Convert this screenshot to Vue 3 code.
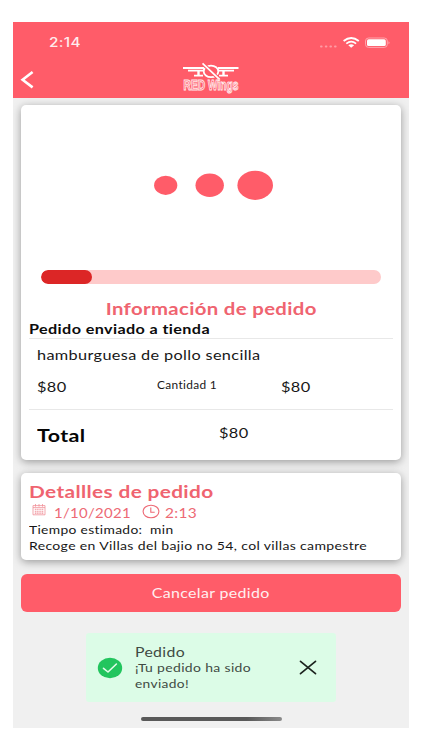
<script setup>
import { ref } from 'vue'

const order = {
  status: 'Pedido enviado a tienda',
  product: 'hamburguesa de pollo sencilla',
  price: '$80',
  quantity: 1,
  subtotal: '$80',
  total: '$80',
  date: '1/10/2021',
  time: '2:13',
  address: 'Recoge en Villas del bajio no 54, col villas campestre'
}

const progress = ref(15)
const showToast = ref(true)

// stretches a label horizontally to the given width
const vFit = {
  mounted(el, { value }) {
    el.style.transform = `scaleX(${value / el.getBoundingClientRect().width})`
  }
}
</script>

<template>
  <main class="screen">
    <header class="header">
      <div class="status-bar">
        <span v-fit="32" class="fit status-bar__time">2:14</span>
        <svg class="status-bar__icons" width="72" height="14" viewBox="0 0 72 14">
          <g fill="#ff9ba4">
            <rect x="1" y="8.4" width="2.6" height="2" rx="1" />
            <rect x="5.8" y="8.4" width="2.6" height="2" rx="1" />
            <rect x="10.4" y="8.4" width="2.6" height="2" rx="1" />
            <rect x="15" y="8.4" width="2.6" height="2" rx="1" />
          </g>
          <g fill="none" stroke="#fff" stroke-width="1.8">
            <path d="M24.6 4Q32.2-2 39.8 4" />
            <path d="M27.3 6.6Q32.2 2.7 37.1 6.6" />
          </g>
          <path d="M29.3 8.3Q32.2 6.4 35.1 8.3L32.2 10.8Z" fill="#fff" />
          <rect x="46.5" y="1" width="21.8" height="9.4" rx="3" fill="none" stroke="#ffabb3" stroke-width="0.9" />
          <rect x="48" y="2.3" width="18.8" height="6.8" rx="1.6" fill="#fff" />
          <path d="M69.5 4.2Q71.6 5.7 69.5 7.2Z" fill="#ffabb3" />
        </svg>
      </div>
      <div class="nav">
        <button type="button" class="nav__back" aria-label="Volver">
          <svg width="14" height="20" viewBox="0 0 14 20">
            <path d="M12.6 2L2.6 9.8l10 7.6" fill="none" stroke="#fff" stroke-width="2.6" />
          </svg>
        </button>
        <svg class="nav__logo" width="60" height="34" viewBox="0 0 60 34">
          <g fill="none" stroke="#fff">
            <path d="M2 6H23M37 6H57.5" stroke-width="2.2" />
            <path d="M7 8.7H22M38 8.7H53" stroke-width="1.7" />
            <path d="M17.5 9V14M42.5 9V14" stroke-width="2.4" />
            <path d="M13 13.6H22M38 13.6H47" stroke-width="1.6" />
            <ellipse cx="30" cy="9.4" rx="7.3" ry="5.8" stroke-width="1.8" />
            <path d="M21.5 1.4L38.5 17.4" stroke="#ff5c69" stroke-width="3.6" />
            <path d="M21.5 1.4L38.5 17.4" stroke-width="1.7" />
          </g>
          <text class="nav__brand" x="2.5" y="28.2" textLength="55" lengthAdjust="spacingAndGlyphs">RED Wings</text>
        </svg>
      </div>
    </header>

    <section class="card order">
      <svg class="order__dots" width="120" height="32" viewBox="0 0 120 32" fill="#ff5c69">
        <ellipse cx="12.7" cy="16.3" rx="11.6" ry="9.6" />
        <ellipse cx="56.7" cy="16.2" rx="14.2" ry="11.7" />
        <ellipse cx="102.2" cy="16.3" rx="17.8" ry="14.6" />
      </svg>
      <div class="order__progress">
        <div class="order__progress-bar" :style="{ width: progress + '%' }"></div>
      </div>
      <h1 class="order__title"><span v-fit="211" class="fit fit--center">Información de pedido</span></h1>
      <p class="order__status"><span v-fit="181" class="fit">{{ order.status }}</span></p>
      <div class="order__item">
        <p class="order__product"><span v-fit="223.5" class="fit">{{ order.product }}</span></p>
        <div class="order__row">
          <span><span v-fit="29.5" class="fit">{{ order.price }}</span></span>
          <span class="order__quantity"><span v-fit="60" class="fit">Cantidad {{ order.quantity }}</span></span>
          <span><span v-fit="29.5" class="fit">{{ order.subtotal }}</span></span>
        </div>
      </div>
      <div class="order__total">
        <strong><span v-fit="48.5" class="fit">Total</span></strong>
        <span class="order__amount"><span v-fit="29.5" class="fit">{{ order.total }}</span></span>
      </div>
    </section>

    <section class="card details">
      <h2 class="details__title"><span v-fit="184.5" class="fit">Detallles de pedido</span></h2>
      <div class="details__when">
        <svg class="details__calendar" width="14" height="12" viewBox="0 0 14 12">
          <path d="M1 1.6H13V10.8H1ZM1 3.6H13" fill="none" stroke="#f08f98" stroke-width="0.8" />
          <path d="M3.5 0V2.7M7 0V2.7M10.5 0V2.7" stroke="#f08f98" stroke-width="0.8" />
          <path d="M2.8 5.3H11.4M2.8 7.2H11.4M2.8 9.1H11.4" stroke="#f08f98" stroke-width="1.1" stroke-dasharray="1.3 0.5" />
        </svg>
        <span class="details__date"><span v-fit="77" class="fit">{{ order.date }}</span></span>
        <svg class="details__clock" width="18" height="15" viewBox="0 0 18 15">
          <ellipse cx="9" cy="7.5" rx="7.9" ry="6.3" fill="none" stroke="#ed6975" stroke-width="1.1" />
          <path d="M8.8 3.5V8.2H12.7" fill="none" stroke="#ed6975" stroke-width="1.1" />
        </svg>
        <span v-fit="32" class="fit">{{ order.time }}</span>
      </div>
      <p class="details__line"><span v-fit="144.5" class="fit">Tiempo estimado:&nbsp; min</span></p>
      <p class="details__line"><span v-fit="338" class="fit">{{ order.address }}</span></p>
    </section>

    <button type="button" class="cancel"><span v-fit="118" class="fit fit--center">Cancelar pedido</span></button>

    <div v-if="showToast" class="toast" role="status">
      <svg class="toast__check" width="26" height="22" viewBox="0 0 26 22">
        <ellipse cx="13" cy="11" rx="12.2" ry="10.2" fill="#22c55e" />
        <path d="M6.5 11.3L11 15L19.4 7" fill="none" stroke="#e4fbeb" stroke-width="1.6" stroke-linecap="round" stroke-linejoin="round" />
      </svg>
      <div class="toast__body">
        <p class="toast__title"><span v-fit="50" class="fit">Pedido</span></p>
        <p><span v-fit="116" class="fit">¡Tu pedido ha sido</span></p>
        <p><span v-fit="54" class="fit">enviado!</span></p>
      </div>
      <button type="button" class="toast__close" aria-label="Cerrar" @click="showToast = false">
        <svg width="18" height="15" viewBox="0 0 18 15">
          <path d="M1.5 1.3L16.5 13.7M16.5 1.3L1.5 13.7" stroke="#1c221e" stroke-width="1.7" stroke-linecap="round" />
        </svg>
      </button>
    </div>

    <div class="home-bar"></div>
  </main>
</template>

<style>
body {
  margin: 0;
  background: #fff;
}
</style>

<style scoped>
.screen {
  box-sizing: border-box;
  width: 396.5px;
  height: 706px;
  margin: 22px 0 0 12.6px;
  display: flex;
  flex-direction: column;
  overflow: hidden;
  background: #f0f0f0;
  color: #171717;
  font-family: Lato, 'Open Sans', sans-serif;
  font-size: 14px;
  font-variant-ligatures: none;
  line-height: 20px;
}

h1,
h2,
p {
  margin: 0;
}

button {
  padding: 0;
  border: none;
  background: transparent;
  font: inherit;
  cursor: pointer;
}

svg {
  display: block;
  flex-shrink: 0;
}

.fit {
  display: inline-block;
  white-space: nowrap;
  letter-spacing: 0.3px;
  transform-origin: left center;
}

.fit--center {
  transform-origin: center;
}

.header {
  height: 76px;
  flex-shrink: 0;
  background: #ff5c69;
  color: #fff;
}

.status-bar {
  height: 40px;
  display: flex;
  justify-content: space-between;
  padding: 0 18px 0 36.5px;
}

.status-bar__time {
  margin-top: 11px;
  font-family: Inter, sans-serif;
  font-size: 12.5px;
  font-weight: 500;
  color: #ffeced;
}

.status-bar__icons {
  margin-top: 14.5px;
}

.nav {
  height: 36px;
  display: flex;
}

.nav__back {
  width: 14px;
  height: 20px;
  margin: 8px 0 0 7px;
}

.nav__logo {
  margin-left: 147.4px;
}

.nav__brand {
  font-family: 'Liberation Sans', sans-serif;
  font-size: 14.5px;
  font-weight: 700;
  fill: #ff5c69;
  stroke: #ffe9eb;
  stroke-width: 1px;
}

.card {
  box-sizing: border-box;
  margin: 0 8px;
  flex-shrink: 0;
  border-radius: 5px;
  background: #fff;
  box-shadow: 0 2px 8px rgba(0, 0, 0, 0.36);
}

.order {
  height: 355px;
  margin-top: 7px;
  padding: 0 8px;
}

.order__dots {
  margin: 64px 0 0 124.4px;
}

.order__progress {
  height: 14px;
  margin: 69px 12px 0;
  overflow: hidden;
  border-radius: 7px;
  background: #fecaca;
}

.order__progress-bar {
  height: 100%;
  border-radius: 7px;
  background: #dc2626;
}

.order__title {
  margin-top: 13px;
  color: #ef6470;
  font-size: 17px;
  font-weight: 700;
  line-height: 24px;
  text-align: center;
}

.order__status {
  height: 17px;
  border-bottom: 1px solid #e8e8e8;
  color: #0c0c0c;
  font-size: 13px;
  font-weight: 700;
  line-height: 16px;
}

.order__item {
  box-sizing: border-box;
  height: 71px;
  padding: 6px 8px 0;
  border-bottom: 1px solid #e8e8e8;
}

.order__row {
  display: grid;
  grid-template-columns: 120px 124.4px auto;
  margin-top: 12px;
}

.order__quantity {
  margin-top: -2px;
  font-size: 10.5px;
}

.order__total {
  display: grid;
  grid-template-columns: 182px auto;
  padding: 13px 8px 0;
}

.order__total strong {
  margin-top: 1px;
  color: #050505;
  font-size: 16.5px;
  line-height: 24px;
}

.details {
  height: 87px;
  margin-top: 13px;
  padding: 7px 8px 0;
}

.details__title {
  color: #ef6470;
  font-size: 17px;
  font-weight: 700;
  line-height: 24px;
}

.details__when {
  height: 18px;
  display: flex;
  color: #ed6975;
  line-height: 17px;
}

.details__calendar {
  margin: 0 0 0 3px;
}

.details__date {
  width: 87.6px;
  margin-left: 8px;
}

.details__clock {
  margin: 0 4.6px 0 1px;
}

.details__line {
  font-size: 12px;
  line-height: 16px;
}

.cancel {
  height: 38px;
  margin: 14px 8px 0;
  flex-shrink: 0;
  border-radius: 6px;
  background: #ff5c69;
  color: #ffeff0;
}

.toast {
  box-sizing: border-box;
  width: 250px;
  height: 69px;
  display: flex;
  align-items: center;
  margin: 21px 0 0 73px;
  padding-left: 11px;
  flex-shrink: 0;
  border-radius: 3px;
  background: #dcfce7;
  color: #404a43;
  font-size: 12px;
  line-height: 16px;
}

.toast__body {
  width: 153px;
  margin-left: 12px;
}

.toast__title {
  font-size: 14px;
  line-height: 17px;
}

.toast__close {
  margin-left: 11px;
}

.home-bar {
  width: 141px;
  height: 4px;
  margin: 15px auto 0 128px;
  flex-shrink: 0;
  border-radius: 2px;
  background: linear-gradient(90deg, #595959 75%, #8a8a8a);
}
</style>
